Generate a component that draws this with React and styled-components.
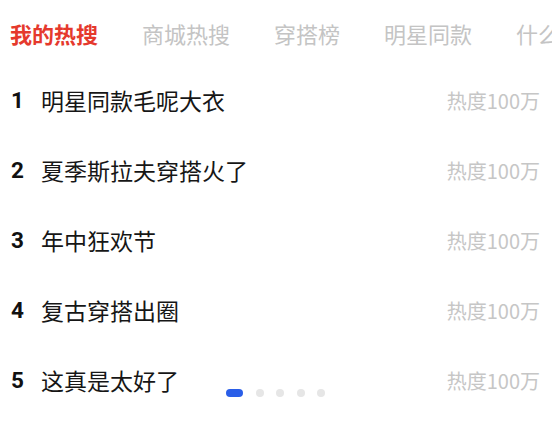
import React from "react";
import styled, { createGlobalStyle } from "styled-components";

const Global = createGlobalStyle`
  html, body { margin: 0; padding: 0; background: #ffffff; }
  body { font-family: "Noto Sans CJK SC", "Noto Sans", sans-serif; }
`;

const Page = styled.div`
  position: relative;
  width: 552px;
  height: 438px;
  overflow: hidden;
  background: #fff;
`;

const TabBar = styled.div`
  display: flex;
  align-items: center;
  gap: 44px;
  height: 65px;
  padding-left: 10px;
  white-space: nowrap;
  overflow: hidden;
`;

const Tab = styled.div`
  flex: none;
  font-size: 22px;
  line-height: 1;
  font-weight: ${(p) => (p.$active ? 700 : 400)};
  color: ${(p) => (p.$active ? "#e5392d" : "#c4c4c4")};
`;

const List = styled.div`
  display: flex;
  flex-direction: column;
`;

const Row = styled.div`
  display: flex;
  align-items: center;
  height: 70px;
  padding: 0 12px 0 11px;
`;

const Rank = styled.span`
  width: 30px;
  flex: none;
  font-family: "Roboto", "Noto Sans", sans-serif;
  font-weight: 700;
  font-size: 22.5px;
  color: #111;
`;

const Title = styled.span`
  flex: 1;
  font-size: 23px;
  color: #161616;
`;

const Heat = styled.span`
  font-size: 20px;
  color: #c6c6c6;
`;

const Dots = styled.div`
  position: absolute;
  left: 226px;
  top: 389px;
  display: flex;
  align-items: center;
  gap: 12.5px;
`;

const Dot = styled.span`
  display: block;
  height: 8px;
  width: ${(p) => (p.$active ? "17px" : "8px")};
  border-radius: 4px;
  background: ${(p) => (p.$active ? "#2a5ee8" : "#e6e6e6")};
`;

const tabs = ["我的热搜", "商城热搜", "穿搭榜", "明星同款", "什么值得买"];
const items = ["明星同款毛呢大衣", "夏季斯拉夫穿搭火了", "年中狂欢节", "复古穿搭出圈", "这真是太好了"];

export default function App() {
  return (
    <Page>
      <Global />
      <TabBar>
        {tabs.map((t, i) => (
          <Tab key={t} $active={i === 0}>{t}</Tab>
        ))}
      </TabBar>
      <List>
        {items.map((t, i) => (
          <Row key={t}>
            <Rank>{i + 1}</Rank>
            <Title>{t}</Title>
            <Heat>热度100万</Heat>
          </Row>
        ))}
      </List>
      <Dots>
        {[0, 1, 2, 3, 4].map((i) => (
          <Dot key={i} $active={i === 0} />
        ))}
      </Dots>
    </Page>
  );
}
